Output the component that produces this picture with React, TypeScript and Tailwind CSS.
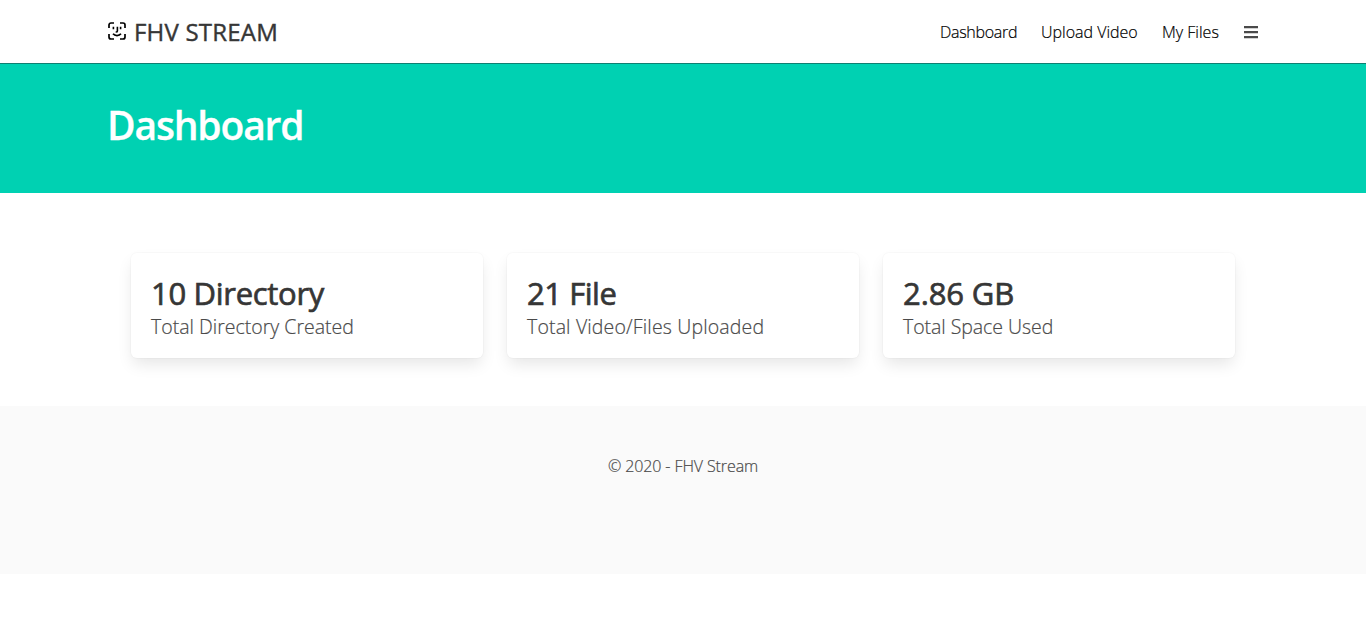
import React from "react";

const stats = [
  { value: "10 Directory", label: "Total Directory Created", valueClass: "tracking-[-0.3px]", labelClass: "tracking-[0px]" },
  { value: "21 File", label: "Total Video/Files Uploaded", valueClass: "tracking-[-0.45px]", labelClass: "tracking-[0.15px]" },
  { value: "2.86 GB", label: "Total Space Used", valueClass: "tracking-[-0.1px]", labelClass: "tracking-[-0.05px]" },
];

function FaceIcon() {
  return (
    <svg className="h-[18px] w-[18px]" viewBox="0 0 18 18" fill="none" stroke="#000" strokeWidth="1.7">
      <path d="M1 6V3a2 2 0 0 1 2-2h3M12 1h3a2 2 0 0 1 2 2v3M17 12v3a2 2 0 0 1-2 2h-3M6 17H3a2 2 0 0 1-2-2v-3" />
      <path d="M5.4 4.7v2.6M12.6 4.7v2.6M9.4 4.7v4.2c0 .8-.5 1.1-1.7 1.1" strokeWidth="1.6" />
      <path d="M5 11.8c2 2.4 6 2.4 8 0" />
    </svg>
  );
}

export default function App() {
  return (
    <div className="min-h-[625px] bg-white font-['Open_Sans','Noto_Sans',sans-serif] text-[#4a4a4a]">
      <header className="h-16 border-b border-[#0f7f72] bg-white px-[108px]">
        <div className="flex h-full items-center justify-between">
          <div className="flex items-center gap-2">
            <div className="-mt-0.5"><FaceIcon /></div>
            <span className="text-2xl tracking-[0.2px] text-[#363636] [-webkit-text-stroke:0.4px_#363636]">FHV STREAM</span>
          </div>
          <nav className="flex items-center gap-6 text-base font-light whitespace-nowrap text-black [-webkit-text-stroke:0.2px_#000]">
            <a className="w-[77px] tracking-[-0.3px]">Dashboard</a>
            <a className="w-[97px]">Upload Video</a>
            <a className="w-[58px]">My Files</a>
            <svg className="h-[14px] w-[14px]" viewBox="0 0 14 14" fill="#4a4a4a">
              <path d="M0 1h14v2.3H0zM0 6h14v2.3H0zM0 11h14v2.3H0z" />
            </svg>
          </nav>
        </div>
      </header>
      <section className="h-[129px] bg-[#00d1b2] px-[107px] pt-[38px]">
        <h1 className="text-[39px] leading-[45px] font-semibold tracking-[-1.15px] text-white [-webkit-text-stroke:0.3px_#fff]">Dashboard</h1>
      </section>
      <main className="grid h-[213px] grid-cols-3 items-start gap-6 px-[131px] pt-[60px]">
        {stats.map((s) => (
          <article
            key={s.label}
            className="h-[105px] rounded-[6px] bg-white px-5 py-[22px] whitespace-nowrap shadow-[0_8px_16px_-2px_rgba(10,10,10,0.1),0_0_0_1px_rgba(10,10,10,0.02)]"
          >
            <p className={`text-[31px] leading-9 text-[#363636] [-webkit-text-stroke:0.7px_#363636] ${s.valueClass}`}>{s.value}</p>
            <p className={`mt-[3px] text-[19.5px] leading-[25px] font-light [-webkit-text-stroke:0.2px_#4a4a4a] ${s.labelClass}`}>{s.label}</p>
          </article>
        ))}
      </main>
      <footer className="h-[168px] bg-[#fafafa] pt-12 text-center">
        <p className="text-base leading-[25px] font-light tracking-[-0.1px] [-webkit-text-stroke:0.2px_#4a4a4a]">© 2020 - FHV Stream</p>
      </footer>
    </div>
  );
}
